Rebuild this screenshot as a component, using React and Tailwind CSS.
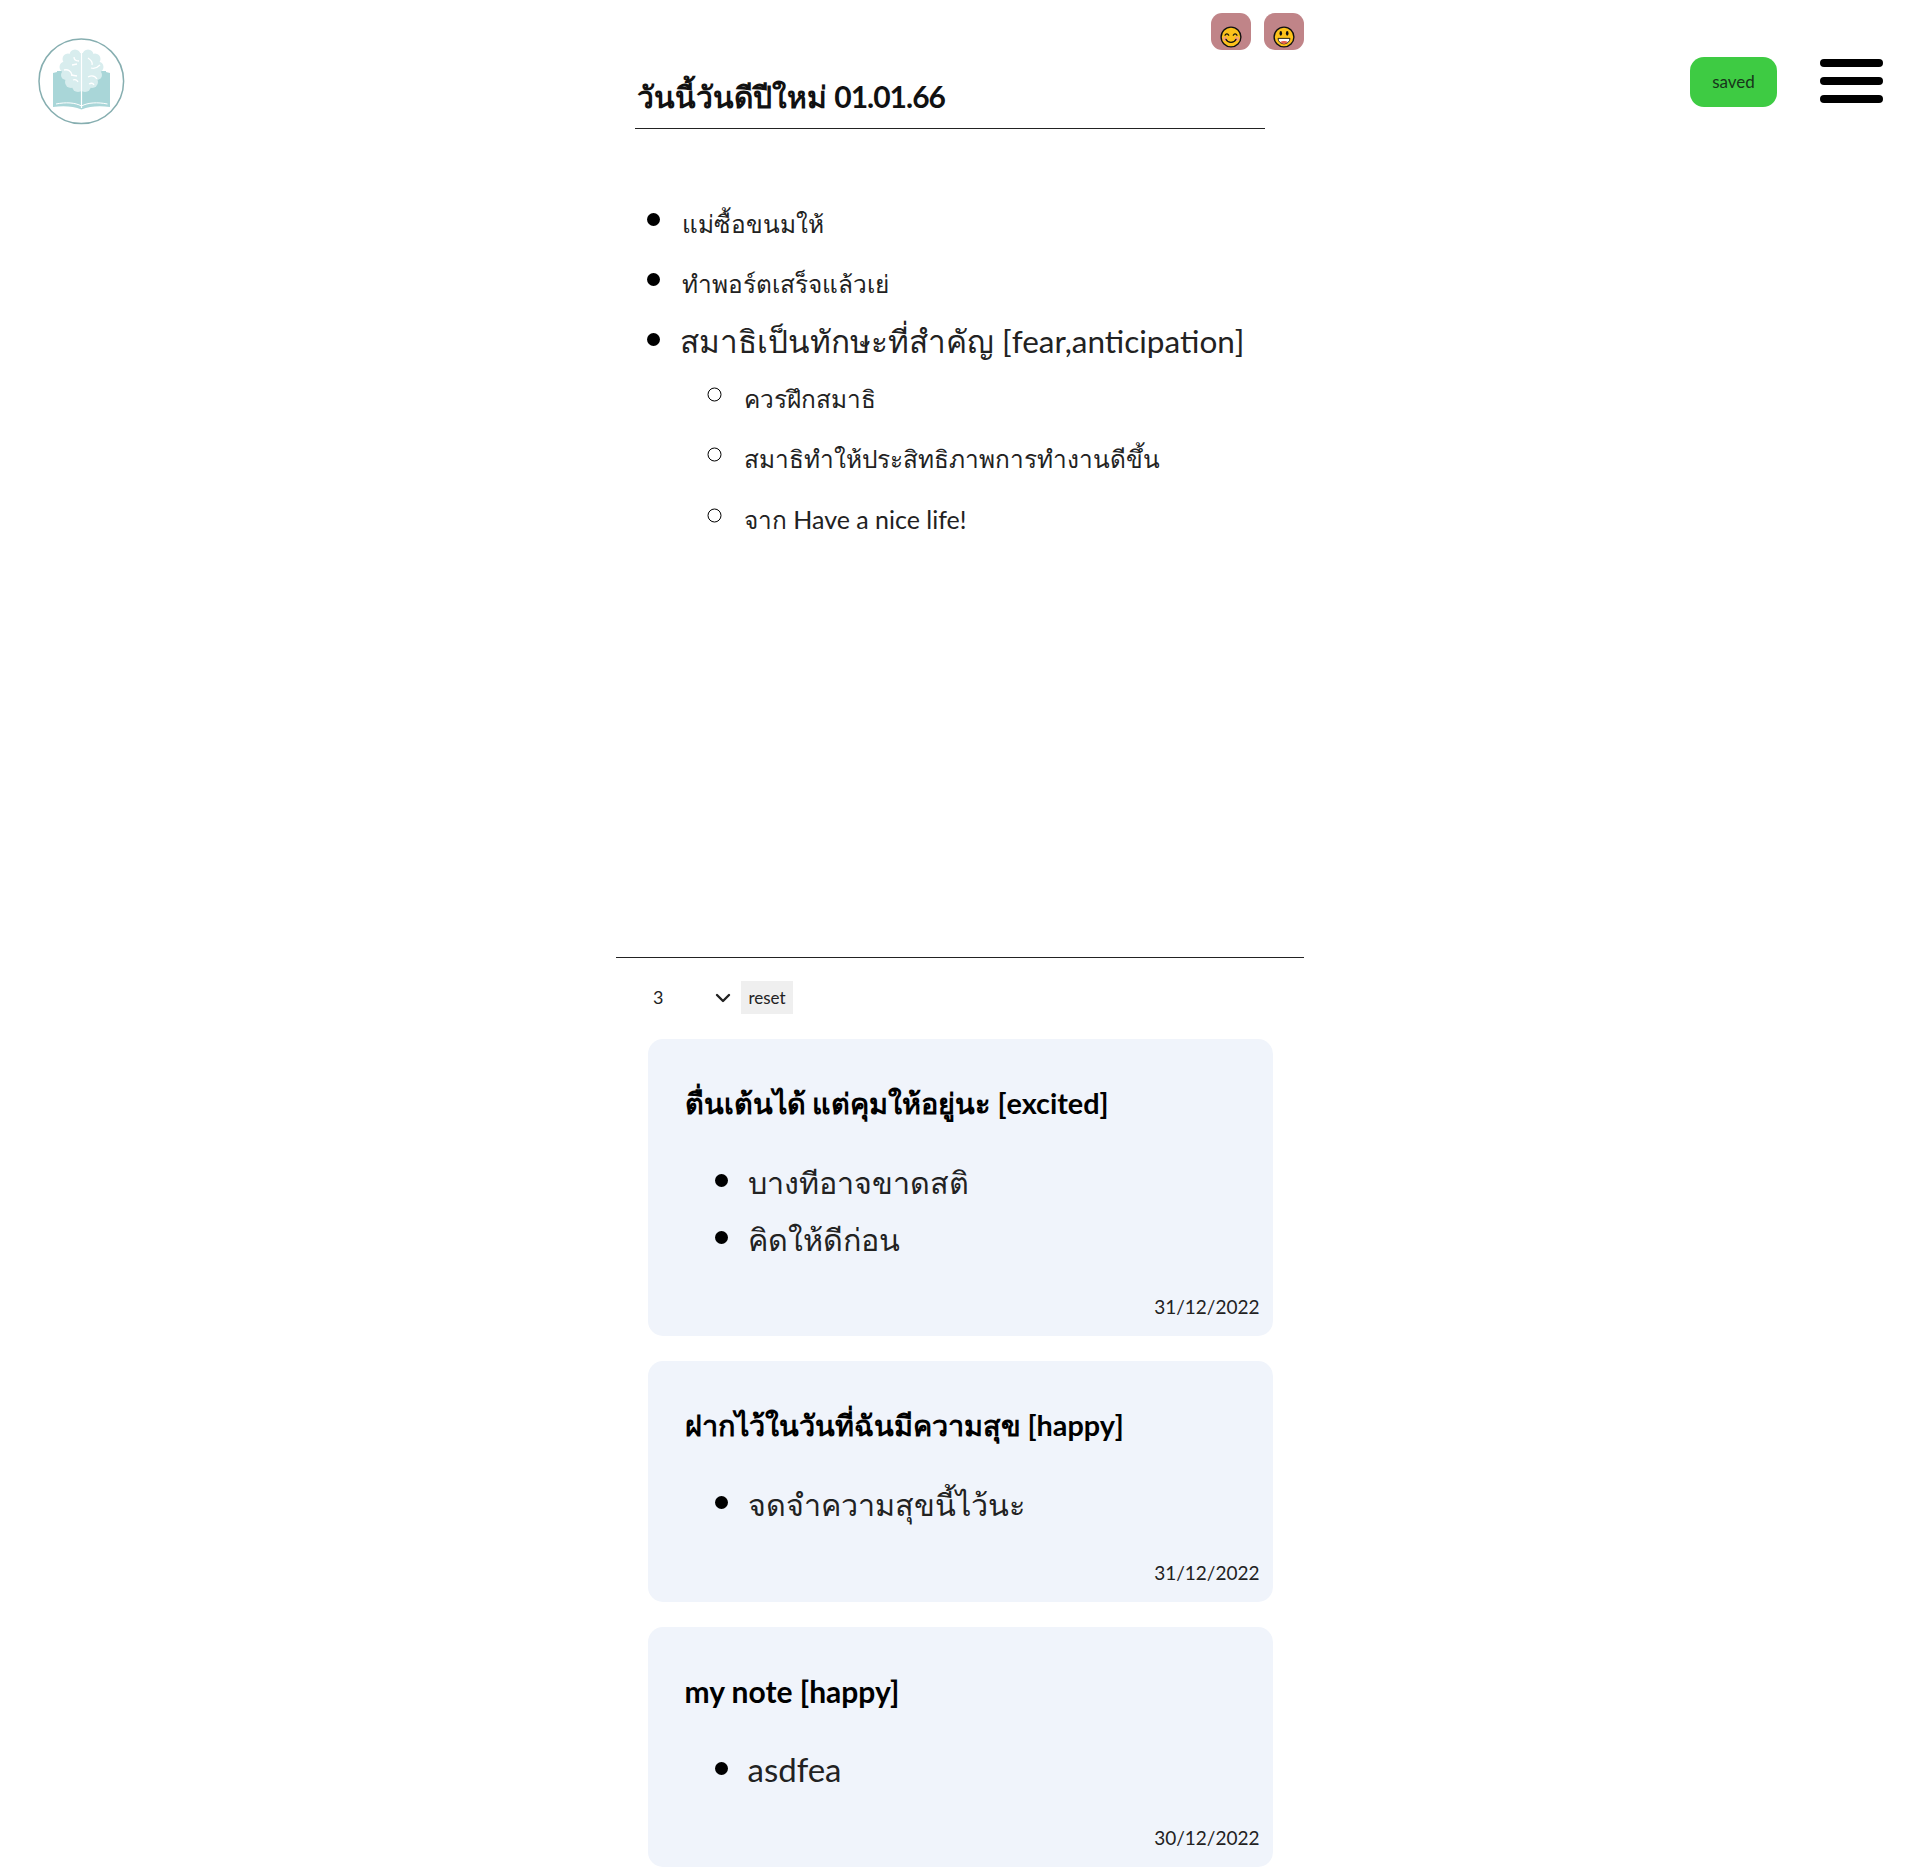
import { ChevronDown } from "lucide-react";

const font = "font-['Lato',sans-serif]";

function Logo() {
  return (
    <svg width="88" height="88" viewBox="0 0 88 88" className="block">
      <circle cx="43.300" cy="43.300" r="42.300" fill="#fff" stroke="#86aeb0" strokeWidth="1.500" />
      <path d="M15 35v34c10-1.500 20-1 28.500 2.500 8.500-3.500 18.500-4 28.500-2.500V35l-4-1v-1H19v1z" fill="#a9d6d8" />
      <path d="M18 66c10-2 19-1.500 25.500 2 6.500-3.500 16-4 26-2" fill="none" stroke="#fff" strokeWidth="1" />
      <g fill="#d8edee">
        <circle cx="43.500" cy="32" r="17" />
        <circle cx="37" cy="17" r="5.500" />
        <circle cx="30" cy="21" r="5.500" />
        <circle cx="27" cy="29" r="5.500" />
        <circle cx="28" cy="37" r="5" />
        <circle cx="33" cy="44" r="6" />
        <circle cx="40" cy="48" r="6" />
        <circle cx="50" cy="17" r="5.500" />
        <circle cx="57" cy="21" r="5.500" />
        <circle cx="60" cy="29" r="5.500" />
        <circle cx="59" cy="37" r="5" />
        <circle cx="54" cy="44" r="6" />
        <circle cx="47" cy="48" r="6" />
      </g>
      <path d="M43.500 12v58" stroke="#fff" strokeWidth="1.200" />
      <path d="M26 32c4-1 7 1 8 5M33 37l6 1M35 42c2-1 4 0 5 2M50 20c3 2 5 4 4 7M62 27c-3 3-6 4-9 3M50 39c4-2 7-1 9 2M51 46c2-1 4-1 5 1M36 19c0 3 2 4 5 4M34 27l5-1" fill="none" stroke="#fff" strokeWidth="1.300" />
    </svg>
  );
}

function FaceSmile() {
  return (
    <svg width="22" height="22" viewBox="0 0 24 24" className="block">
      <circle cx="12" cy="12" r="10.800" fill="#fcc21b" stroke="#111" strokeWidth="1.500" />
      <circle cx="5.500" cy="14" r="2.500" fill="#f8a06a" />
      <circle cx="18.500" cy="14" r="2.500" fill="#f8a06a" />
      <path d="M5.500 10c1-2 3-2 4 0M14.500 10c1-2 3-2 4 0M6.500 14.500c2 4.500 9 4.500 11 0" fill="none" stroke="#111" strokeWidth="1.400" strokeLinecap="round" />
    </svg>
  );
}

function FaceGrin() {
  return (
    <svg width="22" height="22" viewBox="0 0 24 24" className="block">
      <circle cx="12" cy="12" r="10.800" fill="#fcc21b" stroke="#111" strokeWidth="1.500" />
      <ellipse cx="8.500" cy="8" rx="1.400" ry="2.500" fill="#111" />
      <ellipse cx="15.500" cy="8" rx="1.400" ry="2.500" fill="#111" />
      <path d="M5.500 13.500h13c0 3.500-3 6-6.500 6s-6.500-2.500-6.500-6z" fill="#fff" stroke="#111" strokeWidth="1" />
      <path d="M8 17.500c2-1.500 6-1.500 8 0-1 1.300-2.500 2-4 2s-3-.7-4-2z" fill="#e8604c" />
    </svg>
  );
}

function Card({ title, items, date, className, titleClass, itemClass }) {
  return (
    <div className={`bg-[#f0f4fb] rounded-[15px] w-[625px] flex flex-col pb-[15px] ${className}`}>
      <h2 className={`pl-[37px] pt-[44px] leading-[40px] font-bold text-black m-0 ${titleClass}`}>{title}</h2>
      <ul className={`list-disc mt-[29px] pl-[100px] marker:text-[40px] marker:text-black leading-[54px] text-[#222] ${itemClass}`}>
        {items.map((t) => <li key={t}>{t}</li>)}
      </ul>
      <div className="mt-auto text-right pr-[13px] text-[19px] leading-[28px] text-[#222]">{date}</div>
    </div>
  );
}

export default function App() {
  return (
    <div className={`${font} relative w-[1920px] min-h-[1869px] bg-white text-black flex justify-center`}>
      <div className="absolute left-[38px] top-[38px]"><Logo /></div>
      <div className="absolute right-[143px] top-[57px] w-[87px] h-[50px] rounded-[14px] bg-[#3ecb43] flex items-center justify-center text-[17px] text-[#17351a]">saved</div>
      <div className="absolute left-[1820px] top-[59px] w-[63px] flex flex-col gap-[10px]">
        <div className="h-[8px] rounded-full bg-black" />
        <div className="h-[8px] rounded-full bg-black" />
        <div className="h-[8px] rounded-full bg-black" />
      </div>

      <main className="w-[688px] flex flex-col">
        <div className="flex justify-end gap-[13px] pt-[13px]">
          <div className="w-[40px] h-[37px] rounded-[11px] bg-[#c08488] flex items-end justify-center pb-[2px]"><FaceSmile /></div>
          <div className="w-[40px] h-[37px] rounded-[11px] bg-[#c08488] flex items-end justify-center pb-[2px]"><FaceGrin /></div>
        </div>
        <h1 className="ml-[19px] mt-[23px] w-[630px] h-[56px] border-b border-[#222] pl-[2px] text-[30px] leading-[46px] font-bold text-[#111] m-0">วันนี้วันดีปีใหม่ <span className="tracking-[-1px]">01.01.66</span></h1>

        <ul className="list-disc mt-[62px] pl-[64px] h-[766px] text-[#222] marker:text-[40px] marker:text-black">
          <li className="text-[24.400px] leading-[55px]"><span className="ml-[2px]">แม่ซื้อขนมให้</span></li>
          <li className="text-[24.400px] leading-[55px]"><span className="ml-[2px]">ทำพอร์ตเสร็จแล้วเย่</span></li>
          <li className="text-[31.500px] leading-[55px]">สมาธิเป็นทักษะที่สำคัญ [fear,anticipation]
            <ul className="list-[circle] pl-[61px] mt-[-3px]">
              <li className="text-[24.400px] leading-[55px]"><span className="ml-[3px]">ควรฝึกสมาธิ</span></li>
              <li className="text-[24.400px] leading-[55px]"><span className="ml-[3px]">สมาธิทำให้ประสิทธิภาพการทำงานดีขึ้น</span></li>
              <li className="text-[24.400px] leading-[56px]"><span className="ml-[3px]">จาก <span className="text-[25px]">Have a nice life!</span></span></li>
            </ul>
          </li>
        </ul>

        <div className="border-t border-[#222] pt-[23px] pl-[32px] flex items-center gap-[4px]">
          <div className="relative w-[89px] h-[33px]">
            <select defaultValue="3" className="appearance-none w-full h-full pl-[5px] text-[18px] text-[#222]">
              <option value="3">3</option>
            </select>
            <ChevronDown className="absolute left-[63px] top-[5px] w-[24px] h-[24px] text-[#222] pointer-events-none" strokeWidth={2.400} />
          </div>
          <button className="w-[52px] h-[33px] bg-[#efefef] text-[17px] text-[#222]">reset</button>
        </div>

        <div className="flex flex-col items-center gap-[25px] mt-[25px]">
          <Card className="h-[297px]" titleClass="text-[28.800px]" itemClass="text-[30.500px]" title="ตื่นเต้นได้ แต่คุมให้อยู่นะ [excited]" items={["บางทีอาจขาดสติ", "คิดให้ดีก่อน"]} date="31/12/2022" />
          <Card className="h-[241px]" titleClass="text-[28.800px]" itemClass="text-[30.500px]" title="ฝากไว้ในวันที่ฉันมีความสุข [happy]" items={["จดจำความสุขนี้ไว้นะ"]} date="31/12/2022" />
          <Card className="h-[240px]" titleClass="text-[30px]" itemClass="text-[33px]" title="my note [happy]" items={["asdfea"]} date="30/12/2022" />
        </div>
      </main>
    </div>
  );
}
